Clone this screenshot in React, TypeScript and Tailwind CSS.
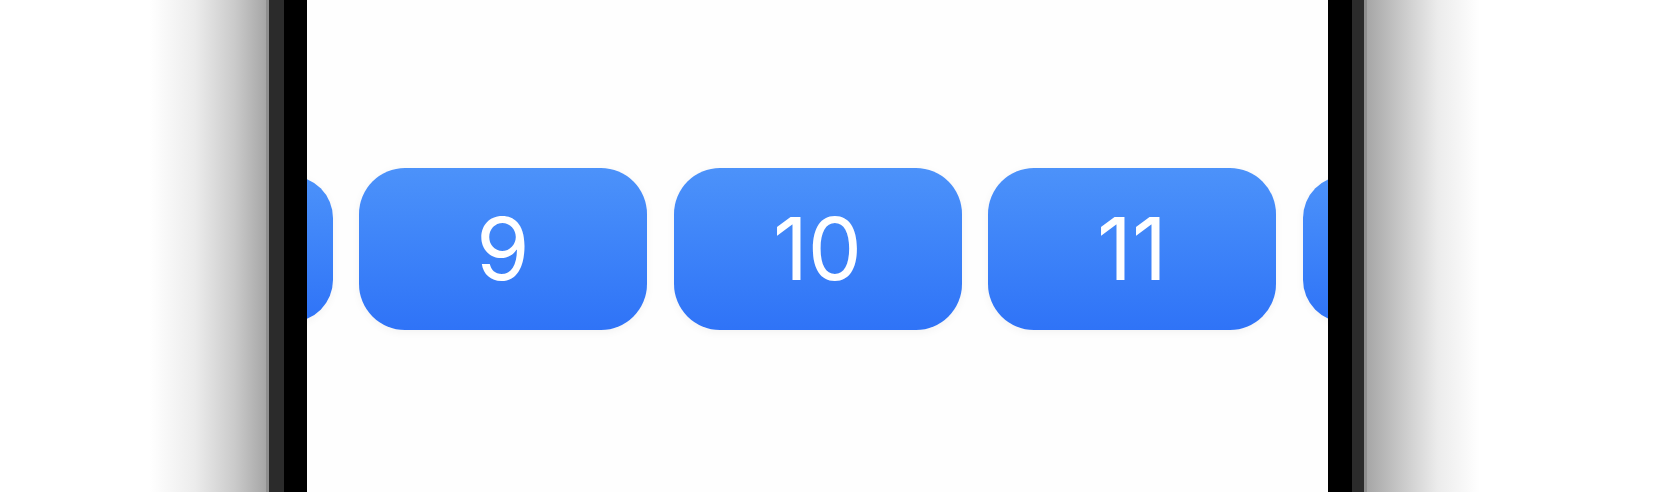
const days = [8, 9, 10, 11, 12];

function DayChip({ day, edge }: { day: number; edge: boolean }) {
  return (
    <div
      className={
        edge
          ? "flex h-[146px] w-[260px] shrink-0 items-center justify-center rounded-[42px] bg-gradient-to-b from-[#4c92fa] to-[#2f73f7] shadow-[0_2px_8px_rgba(0,0,0,0.05)]"
          : "flex h-[162px] w-[288px] shrink-0 items-center justify-center rounded-[46px] bg-gradient-to-b from-[#4c92fa] to-[#2f73f7] shadow-[0_2px_8px_rgba(0,0,0,0.05)]"
      }
      aria-label={String(day)}
    >
      {!edge && (
        <span className="font-[family-name:Inter,sans-serif] text-[86px] font-normal leading-none text-white">
          {day}
        </span>
      )}
    </div>
  );
}

export default function App() {
  return (
    <div className="flex h-[492px] w-full overflow-hidden bg-white">
      {/* shadow cast by the device onto the backdrop */}
      <div className="w-[266px] shrink-0 bg-[linear-gradient(to_right,#ffffff_150px,#ececec_195px,#cacaca_235px,#a6a6a6_266px)]" />

      {/* left bezel */}
      <div className="w-[3px] shrink-0 bg-[#8e8e8e]" />
      <div className="w-[15px] shrink-0 bg-[#2b2b2b]" />
      <div className="w-[23px] shrink-0 bg-black" />

      {/* screen */}
      <div className="flex min-w-0 flex-1 items-center justify-center gap-[26.5px] overflow-hidden bg-[#fefefe] pt-[6px]">
        {days.map((d, i) => (
          <DayChip key={d} day={d} edge={i === 0 || i === days.length - 1} />
        ))}
      </div>

      {/* right bezel */}
      <div className="w-[24px] shrink-0 bg-black" />
      <div className="w-[12px] shrink-0 bg-[#2b2b2b]" />
      <div className="w-[3px] shrink-0 bg-[#8e8e8e]" />

      <div className="w-[301px] shrink-0 bg-[linear-gradient(to_left,#ffffff_188px,#ececec_230px,#cacaca_265px,#a6a6a6_301px)]" />
    </div>
  );
}
